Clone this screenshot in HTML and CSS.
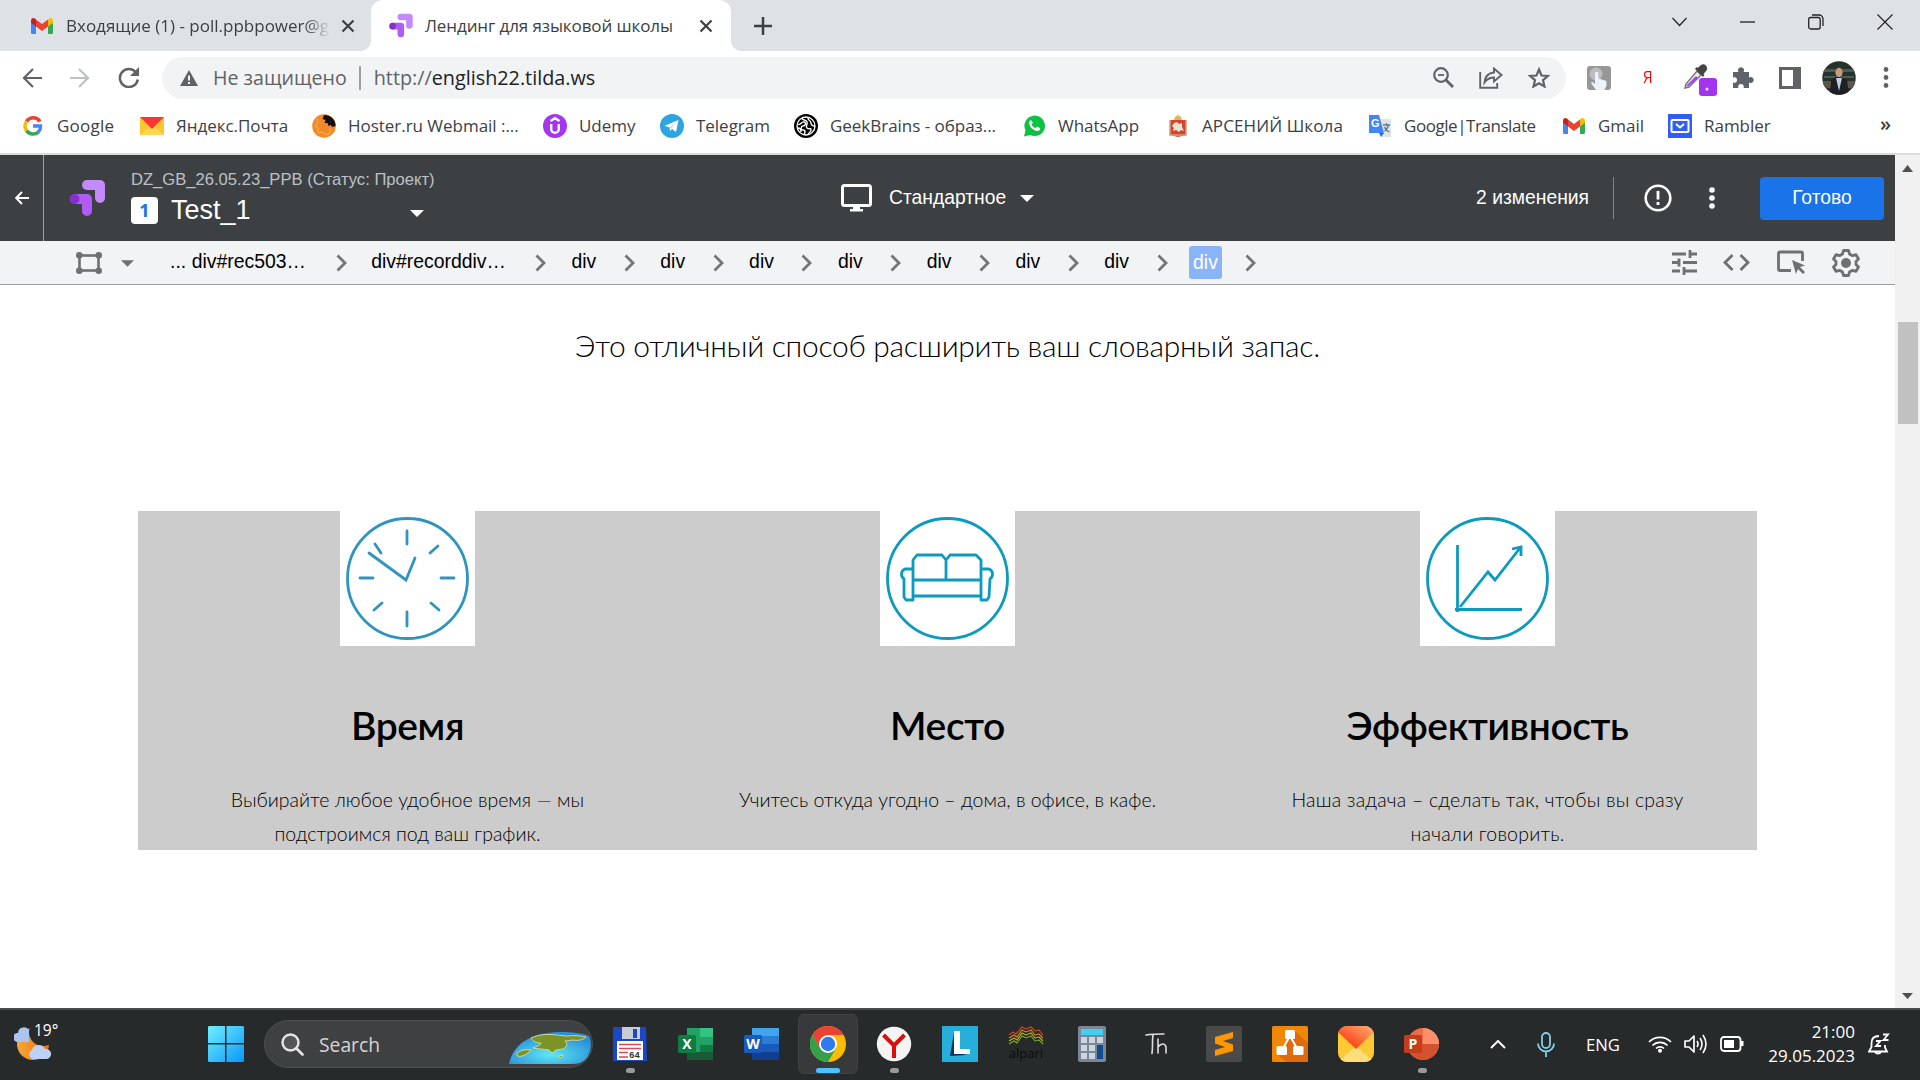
FILE: index.html
```html
<!DOCTYPE html>
<html lang="ru">
<head>
<meta charset="utf-8">
<title>Лендинг для языковой школы</title>
<link rel="stylesheet" href="styles.css">
</head>
<body>
<svg width="0" height="0" class="defs">
  <defs>
    <symbol id="gmail" viewBox="0 0 22 16"><path d="M0 3v11.500a1.500 1.500 0 0 0 1.500 1.500H5V6z" fill="#4285f4"/><path d="M22 3v11.500a1.500 1.500 0 0 1-1.500 1.500H17V6z" fill="#34a853"/><path d="M5 1.500l6 4.500 6-4.500V8.500L11 13 5 8.500z" fill="#ea4335"/><path d="M0 2.500C0 .2 2.400-.6 4 .6l1 .8v7L0 4.800z" fill="#c5221f"/><path d="M22 2.500C22 .2 19.600-.6 18 .6l-1 .8v7l5-3.600z" fill="#fbbc04"/></symbol>
    <symbol id="optimize" viewBox="0 0 38 38"><path d="M18 6h13v13" fill="none" stroke="#c58af9" stroke-width="10" stroke-linecap="round" stroke-linejoin="round"/><path d="M6 20h12v12" fill="none" stroke="#af5cf7" stroke-width="10" stroke-linecap="round" stroke-linejoin="round"/><circle cx="5.500" cy="20" r="5" fill="#8430ce"/></symbol>
    <symbol id="x" viewBox="0 0 14 14"><path d="M1.500 1.500l11 11m0-11l-11 11" stroke="#3c4043" stroke-width="2.200"/></symbol>
    <symbol id="chev" viewBox="0 0 11 18"><path d="M1.500 1.500L9 9l-7.500 7.500" fill="none" stroke="#757575" stroke-width="2.800"/></symbol>
    <symbol id="caret" viewBox="0 0 14 7"><path d="M0 0h14L7 7z" fill="currentColor"/></symbol>
  </defs>
</svg>

<div class="tabstrip">
  <div class="tab">
    <svg width="22" height="16"><use href="#gmail"/></svg>
    <span class="tab-title faded">Входящие (1) - poll.ppbpower@g</span>
    <svg width="14" height="14"><use href="#x"/></svg>
  </div>
  <div class="tab active">
    <svg width="25" height="25"><use href="#optimize"/></svg>
    <span class="tab-title">Лендинг для языковой школы</span>
    <svg width="14" height="14"><use href="#x"/></svg>
  </div>
  <svg class="plus" width="18" height="18" viewBox="0 0 18 18"><path d="M9 0v18M0 9h18" stroke="#3c4043" stroke-width="2.500"/></svg>
  <div class="window-controls">
    <svg width="15" height="10" viewBox="0 0 15 10"><path d="M.5 1L7.500 8.500 14.500 1" fill="none" stroke="#222" stroke-width="1.200"/></svg>
    <svg width="15" height="2" viewBox="0 0 15 2"><path d="M0 1h15" stroke="#222" stroke-width="1.300"/></svg>
    <svg width="16" height="16" viewBox="0 0 16 16"><path d="M4 1h7a4 4 0 0 1 4 4v7" fill="none" stroke="#222" stroke-width="1.300"/><rect x=".7" y="3.500" width="11.500" height="11.500" rx="2" fill="none" stroke="#222" stroke-width="1.300"/></svg>
    <svg width="16" height="16" viewBox="0 0 16 16"><path d="M.5.5l15 15m0-15l-15 15" stroke="#222" stroke-width="1.200"/></svg>
  </div>
</div>

<div class="toolbar">
  <svg width="20" height="20" viewBox="0 0 20 20"><path d="M20 10H2M11 1L2 10l9 9" fill="none" stroke="#5f6368" stroke-width="2.200"/></svg>
  <svg width="20" height="20" viewBox="0 0 20 20"><path d="M0 10h18M9 1l9 9-9 9" fill="none" stroke="#bdc1c6" stroke-width="2.200"/></svg>
  <svg width="22" height="21" viewBox="0 0 22 21"><path d="M18 5.500A9 9 0 1 0 19.800 12.500" fill="none" stroke="#5f6368" stroke-width="2.500"/><path d="M21 0v9h-9z" fill="#5f6368"/></svg>
  <div class="omnibox">
    <svg width="18" height="16" viewBox="0 0 18 16"><path d="M9 0l9 16H0z" fill="#5f6368"/><path d="M9 5.500v5M9 12v2" stroke="#f1f3f4" stroke-width="2"/></svg>
    <span class="insecure">Не защищено</span>
    <span class="url"><i>http://</i>english22.tilda.ws</span>
    <div class="omni-actions">
      <svg width="21" height="21" viewBox="0 0 21 21"><circle cx="8" cy="8" r="6.800" fill="none" stroke="#5f6368" stroke-width="2.200"/><path d="M13 13l7 7" stroke="#5f6368" stroke-width="2.800"/><path d="M5 8h6" stroke="#5f6368" stroke-width="1.800"/></svg>
      <svg width="24" height="22" viewBox="0 0 24 22"><path d="M1.200 5v15.800h17V16" fill="none" stroke="#5f6368" stroke-width="1.900"/><path d="M5.500 15.500C6 9.500 9.500 6 15 5.500V1.500l7.500 6.500-7.500 6.500V10.500c-4 0-7 1.500-9.500 5z" fill="none" stroke="#5f6368" stroke-width="1.900"/></svg>
      <svg width="22" height="21" viewBox="0 0 22 21"><path d="M11 2.500l2.500 6 6.300.5-4.800 4.200 1.500 6.300L11 16.200l-5.500 3.300L7 13.200 2.200 9l6.300-.5z" fill="none" stroke="#5f6368" stroke-width="2.200"/></svg>
    </div>
  </div>
  <div class="extensions">
    <svg width="24" height="24" viewBox="0 0 24 24"><rect width="24" height="24" rx="3" fill="#979797"/><circle cx="9" cy="8" r="6.500" fill="#bdbdbd"/><path d="M8 7.500a1.700 1.700 0 0 1 3.400 0v5l8 2.500v5l-2 4H9l-5-7 1.500-1L8 18z" fill="#eef3fa"/></svg>
    <span class="ya">Я</span>
    <svg width="34" height="34" viewBox="0 0 34 34"><path d="M3 22l-1 4 4-1L18 13l-4-4z" fill="#eee" stroke="#777" stroke-width="1.500"/><path d="M3.500 23.500L13 14l2 2-10 8.500z" fill="#a142f4"/><path d="M12 7l8 8 1.500-2-1-1 3-3.500a4 4 0 0 0-5.500-5.500l-3.500 3-1-1z" fill="#444"/><rect x="16" y="16" width="18" height="18" rx="3" fill="#a333ee"/><circle cx="24" cy="27" r="1.500" fill="#fff"/></svg>
    <svg width="22" height="22" viewBox="0 0 22 22"><path d="M1 5h5.500a3 3 0 1 1 5 0H17v5.500a3 3 0 1 1 0 5V21h-5.500a2.800 2.800 0 1 0-5 0H1v-5.500a2.800 2.800 0 1 0 0-5z" fill="#5f6368"/></svg>
    <svg width="22" height="22" viewBox="0 0 22 22"><path fill-rule="evenodd" d="M0 0h22v22H0zM3 3v16h11V3z" fill="#5f6368"/></svg>
    <svg width="34" height="34" viewBox="0 0 34 34"><defs><clipPath id="av"><circle cx="17" cy="17" r="16.700"/></clipPath></defs><g clip-path="url(#av)"><path d="M0 0h34v34H0z" fill="#26332d"/><path d="M0 8h34v3H0zM2 15h30v2H2z" fill="#4d5b54"/><path d="M0 20h34v7H0z" fill="#5f554b"/><path d="M8 34l1-15 7-4 9 4 2 15z" fill="#1d1f24"/><path d="M14 17l3 13 3-13z" fill="#bcd0e0"/><ellipse cx="17" cy="11.500" rx="3.600" ry="4.700" fill="#c99a7d"/></g></svg>
    <svg width="6" height="21" viewBox="0 0 6 21"><circle cx="3" cy="2.500" r="2.400" fill="#5f6368"/><circle cx="3" cy="10.500" r="2.400" fill="#5f6368"/><circle cx="3" cy="18.500" r="2.400" fill="#5f6368"/></svg>
  </div>
</div>

<div class="bookmarks">
  <div class="bm"><svg viewBox="0 0 24 24"><path d="M19 7.500A8 8 0 0 0 5.500 7.500" fill="none" stroke="#ea4335" stroke-width="3.600"/><path d="M5.500 7.500a8 8 0 0 0 0 9" fill="none" stroke="#fbbc05" stroke-width="3.600"/><path d="M5.500 16.500a8 8 0 0 0 12 1.500" fill="none" stroke="#34a853" stroke-width="3.600"/><path d="M12 12h7.500a8 8 0 0 1-2.200 6" fill="none" stroke="#4285f4" stroke-width="3.400"/></svg>Google</div>
  <div class="bm"><svg viewBox="0 0 24 24"><path d="M0 3h24v18H0z" fill="#ffc531"/><path d="M0 21l12-11 12 11z" fill="#ffd64d"/><path d="M0 3h24L12 15z" fill="#f33"/></svg>Яндекс.Почта</div>
  <div class="bm"><svg viewBox="0 0 24 24"><circle cx="12" cy="12" r="11.800" fill="#f48a27"/><path d="M12 1c8 0 12 6 11.500 11l-3 1-2-2-2 1-1-3-3 0 1-3-3-1z" fill="#111"/><path d="M5 5l1 4-3 3 3 2 0 5 5-1 3 3 4-2 0-5" fill="none" stroke="#e8b56f"/></svg>Hoster.ru Webmail :...</div>
  <div class="bm"><svg viewBox="0 0 24 24"><circle cx="12" cy="12" r="12" fill="#a435f0"/><path d="M7.500 7l4.500-2.800L16.500 7M8.200 10v5a3.800 3.800 0 0 0 7.600 0v-5" fill="none" stroke="#fff" stroke-width="2.400"/></svg>Udemy</div>
  <div class="bm"><svg viewBox="0 0 24 24"><circle cx="12" cy="12" r="12" fill="#2ca5e0"/><path d="M4.500 11.800L18.500 6l-2.500 12-4-3-2 2-.5-3.500z" fill="#fff"/><path d="M9.500 13.500l6.500-5-5 6" fill="#b9dff3"/></svg>Telegram</div>
  <div class="bm"><svg viewBox="0 0 24 24"><circle cx="12" cy="12" r="12" fill="#000"/><circle cx="12" cy="12" r="9" fill="none" stroke="#fff" stroke-width="1.300"/><path d="M4 10c3 2 3-3 6-2s1 4-1 4-3 4 0 4 2 3 1 5M8 4c0 3 4 1 5 4s-2 4 0 6 4-1 4 2-3 2-3 5M14 4c0 3 3 2 3 5s2 3 4 3M4 14c2 0 3 1 3 4" fill="none" stroke="#fff" stroke-width="1.400"/></svg>GeekBrains - образ...</div>
  <div class="bm"><svg viewBox="0 0 24 24"><path d="M2 22.500l1.500-6A10.300 10.300 0 1 1 8 21z" fill="#0fc143"/><path d="M8 6.500c-3 3 2 10.500 8 10.500 2-.5 2.500-2 2-3l-3-1.500-1.500 1.500c-2-.5-3.500-2-4-4L11 9 9.500 6.500z" fill="#fff"/></svg>WhatsApp</div>
  <div class="bm"><svg viewBox="0 0 24 24"><path d="M8 6l1-3 3-2 3 2 1 3z" fill="#d9b850"/><path d="M4 6h16v15l-8 2-8-2z" fill="#d4442f"/><path d="M8 9l3-1 2 2 3-1v4l2 4-3-1-2 2-3-2-3 1 1-3-2-2z" fill="#ece3d2"/><path d="M4 6v16m16-16v16M5 21h14" stroke="#d3a07c" stroke-width="1.500"/></svg>АРСЕНИЙ Школа</div>
  <div class="bm"><svg viewBox="0 0 24 24"><path d="M10 5h13v18H13z" fill="#dfe3e8"/><path d="M1 1h10l5 18H1z" fill="#4285f4"/><path d="M11 19h5l-3 4z" fill="#3367d6"/><text x="3" y="13" class="gt">G</text><path d="M15 11h7m-3.500-2v2m2 0c-1 4-2 5-4 6m0-4c1 3 2 4 5 5" fill="none" stroke="#607d8b" stroke-width="1.300"/></svg>Google|Translate</div>
  <div class="bm"><svg viewBox="0 0 24 24"><use href="#gmail" x="1" y="4" width="22" height="16"/></svg>Gmail</div>
  <div class="bm"><svg viewBox="0 0 24 24"><path d="M0 0h24v24H0z" fill="#315efb"/><rect x="3.500" y="6" width="17" height="12" rx="1" fill="none" stroke="#fff" stroke-width="2"/><path d="M8 10l4 3.500 4-3.500" fill="none" stroke="#fff" stroke-width="2"/></svg>Rambler</div>
  <div class="more">»</div>
</div>

<div class="viewport">
  <div class="page">
    <header class="editor">
      <div class="back"><svg width="14" height="14" viewBox="0 0 14 14"><path d="M14 7H1.500M7 1L1.200 7 7 13" fill="none" stroke="#fff" stroke-width="1.900"/></svg></div>
      <svg width="38" height="38"><use href="#optimize"/></svg>
      <div class="project">
        <div class="status">DZ_GB_26.05.23_PPB (Статус: Проект)</div>
        <div class="variant"><b>1</b><span>Test_1</span><svg width="14" height="7"><use href="#caret"/></svg></div>
      </div>
      <div class="device">
        <svg width="31" height="28" viewBox="0 0 31 28"><rect x="1.500" y="1.500" width="28" height="20" rx="2" fill="none" stroke="#fff" stroke-width="3"/><path d="M12 22h7v3h3v2.500H9V25h3z" fill="#fff"/></svg>
        <span>Стандартное</span>
        <svg width="14" height="7"><use href="#caret"/></svg>
      </div>
      <div class="actions">
        <span class="changes">2 изменения</span>
        <svg width="28" height="28" viewBox="0 0 28 28"><circle cx="14" cy="14" r="12.300" fill="none" stroke="#fff" stroke-width="2.600"/><path d="M14 7v8.500M14 18v3" stroke="#fff" stroke-width="2.800"/></svg>
        <svg width="6" height="22" viewBox="0 0 6 22"><circle cx="3" cy="3" r="2.800" fill="#fff"/><circle cx="3" cy="11" r="2.800" fill="#fff"/><circle cx="3" cy="19" r="2.800" fill="#fff"/></svg>
        <button class="done">Готово</button>
      </div>
    </header>

    <nav class="crumbs">
      <svg class="frame" width="26" height="22" viewBox="0 0 26 22"><rect x="3.500" y="3.500" width="19" height="15" fill="none" stroke="#6e7072" stroke-width="2.600"/><g fill="#6e7072"><circle cx="3.300" cy="3.300" r="3.300"/><circle cx="22.700" cy="3.300" r="3.300"/><circle cx="3.300" cy="18.700" r="3.300"/><circle cx="22.700" cy="18.700" r="3.300"/></g></svg>
      <svg class="frame-caret" width="13" height="7"><use href="#caret"/></svg>
      <span class="crumb long first">... div#rec503…</span><svg width="11" height="18"><use href="#chev"/></svg>
      <span class="crumb long">div#recorddiv…</span><svg width="11" height="18"><use href="#chev"/></svg>
      <span class="crumb">div</span><svg width="11" height="18"><use href="#chev"/></svg>
      <span class="crumb">div</span><svg width="11" height="18"><use href="#chev"/></svg>
      <span class="crumb">div</span><svg width="11" height="18"><use href="#chev"/></svg>
      <span class="crumb">div</span><svg width="11" height="18"><use href="#chev"/></svg>
      <span class="crumb">div</span><svg width="11" height="18"><use href="#chev"/></svg>
      <span class="crumb">div</span><svg width="11" height="18"><use href="#chev"/></svg>
      <span class="crumb">div</span><svg width="11" height="18"><use href="#chev"/></svg>
      <span class="crumb"><em>div</em></span><svg width="11" height="18"><use href="#chev"/></svg>
      <div class="tools">
        <svg width="25" height="25" viewBox="0 0 25 25"><path d="M0 4h14M18 4h7M18 0v8M0 12.500h7M11 12.500h14M7 8.500v8M0 21h8M12 21h13M12 17v8" fill="none" stroke="#6e7072" stroke-width="2.800"/></svg>
        <svg width="27" height="17" viewBox="0 0 27 17"><path d="M9.500 1L2 8.500 9.500 16M17.500 1L25 8.500 17.500 16" fill="none" stroke="#6e7072" stroke-width="2.800"/></svg>
        <svg width="29" height="25" viewBox="0 0 29 25"><path d="M14 20.500H3a1.500 1.500 0 0 1-1.500-1.500V3.500A1.500 1.500 0 0 1 3 2h21a1.500 1.500 0 0 1 1.500 1.500V11" fill="none" stroke="#6e7072" stroke-width="2.800"/><path d="M15 10l13 5.500-5 1.500 5 5-2 2-5-5-2 5z" fill="#6e7072"/></svg>
        <svg width="28" height="28" viewBox="0 0 28 28"><path d="M11.500 1.500h5l1 3.500 3 1.700 3.500-1 2.500 4.300-2.500 2.500v3l2.500 2.500-2.500 4.300-3.500-1-3 1.700-1 3.500h-5l-1-3.500-3-1.700-3.500 1L1.500 18 4 15.500v-3L1.500 10 4 5.700l3.500 1 3-1.700z" fill="none" stroke="#6e7072" stroke-width="2.800" stroke-linejoin="round"/><circle cx="14" cy="14" r="5" fill="#6e7072"/></svg>
      </div>
    </nav>

    <main>
      <p class="lead">Это отличный способ расширить ваш словарный запас.</p>
      <section class="features">
        <article>
          <svg class="pic" viewBox="0 0 135 135"><rect width="135" height="135" fill="#fff"/><g fill="none" stroke="#3095be" stroke-width="2.800"><circle cx="67.500" cy="67.500" r="60"/><g stroke-linecap="round"><path d="M67 20v13M67 101v14M20 67h13M101 67h13M90 42l8-7M42 92l-8 7M91 92l8 7M41 42l-6-9"/><path d="M29 42l37 27 9-22"/></g></g></svg>
          <h2>Время</h2>
          <p>Выбирайте любое удобное время — мы<br>подстроимся под ваш график.</p>
        </article>
        <article>
          <svg class="pic" viewBox="0 0 135 135"><rect width="135" height="135" fill="#fff"/><g fill="none" stroke="#0c9abe" stroke-width="2.800" stroke-linejoin="round"><circle cx="67.500" cy="67.500" r="60"/><path d="M33 68V49l4-5h25l4 5v20M66 49l4-5h26l5 5v20M33 58h-8c-5 2-4 8-1 10v18l2 3h7V68M101 58h8c5 2 4 8 1 10l-1 18-2 3h-6V68M33 69h68M33 85h68"/></g></svg>
          <h2>Место</h2>
          <p>Учитесь откуда угодно – дома, в офисе, в кафе.</p>
        </article>
        <article>
          <svg class="pic" viewBox="0 0 135 135"><rect width="135" height="135" fill="#fff"/><g fill="none" stroke="#0c9abe" stroke-width="2.800"><circle cx="67.500" cy="67.500" r="60"/><path d="M37.500 34v67M35 98.500h67M40 96l28-35 7 8 25-32M92 38l9-2 0 9"/></g></svg>
          <h2>Эффективность</h2>
          <p class="wide">Наша задача – сделать так, чтобы вы сразу<br>начали говорить.</p>
        </article>
      </section>
    </main>
  </div>
  <div class="scrollbar">
    <svg width="11" height="7" viewBox="0 0 11 7"><path d="M0 7h11L5.500 0z" fill="#505050"/></svg>
    <div class="thumb"></div>
    <svg width="11" height="6" viewBox="0 0 11 6"><path d="M0 0h11L5.500 6z" fill="#505050"/></svg>
  </div>
</div>

<footer class="taskbar">
  <div class="weather">
    <svg width="42" height="38" viewBox="0 0 42 38"><defs><linearGradient id="sun" x2="1" y2="0"><stop stop-color="#f2a93b"/><stop offset="1" stop-color="#f0700f"/></linearGradient></defs><circle cx="19" cy="19" r="16" fill="url(#sun)"/><path d="M3 17a4.500 4.500 0 0 1 1-9 6 6 0 0 1 11-3v12z" fill="#aac4ee"/><circle cx="29" cy="7" r="14" fill="#2a2a2a"/><path d="M18 34a5 5 0 0 1 0-9 7 7 0 0 1 13-1 5 5 0 0 1 2 10z" fill="#bcd1f5"/></svg>
    <span>19°</span>
  </div>
  <svg class="win" width="36" height="36" viewBox="0 0 36 36"><defs><linearGradient id="wg" x2="1" y2="1"><stop stop-color="#6ff0ff"/><stop offset="1" stop-color="#0a96fb"/></linearGradient></defs><path d="M1 0h16v17H0V1zM18.500 0H35l1 1v16H18.500zM0 18.500h17V36H1l-1-1zM18.500 18.500H36V35l-1 1H18.500z" fill="url(#wg)"/></svg>
  <div class="search">
    <svg width="23" height="23" viewBox="0 0 23 23"><circle cx="9.500" cy="9.500" r="8" fill="#555" stroke="#e4e4e4" stroke-width="2.400"/><path d="M15.500 15.500l6 6" stroke="#e4e4e4" stroke-width="2.600" stroke-linecap="round"/></svg>
    <span>Search</span>
    <svg width="82" height="33" viewBox="0 0 82 33"><defs><radialGradient id="gl" cx=".5" cy=".7" r=".6"><stop stop-color="#5fe8f5"/><stop offset="1" stop-color="#2a90d8"/></radialGradient></defs><path d="M0 32C5 8 28 0 52 0c12 0 21 1 28 4 3 7 2 13 0 18-3 7-9 10-16 10z" fill="url(#gl)"/><g fill="#7c9426" stroke="#e7e3a6" stroke-width=".8"><path d="M22 6c8-4 18-4 26-3l10 1c8-1 14 0 19 1-3 3-8 4-13 3l-8 1c3 3 2 6-2 8l-7 1-4 3-3-3c-6-1-11-1-16-2 5-2 8-3 8-5-4 0-8-1-10-5z"/><path d="M8 21c4-3 9-4 14-3-2 3-6 5-9 6-3 1-6 0-5-3zM49 24l5-1-2 3z"/></g></svg>
  </div>
  <div class="apps">
    <div class="app"><svg viewBox="0 0 36 36"><path d="M1 1h33l1 34H1z" fill="#1d48c5"/><path d="M10 1h18v12H10z" fill="#c9ccd6"/><path d="M21 3h4v9h-4z" fill="#1d48c5"/><path d="M5 15h26v19H5z" fill="#fff"/><path d="M7 18.500h22M7 22.500h22M7 26.500h9M7 31h9" stroke="#d94a57" stroke-width="1.300"/><text x="17" y="32" class="fl">64</text></svg><i></i></div>
    <div class="app"><svg viewBox="0 0 36 36"><path d="M9 2h14v32H9z" fill="#21a366"/><path d="M22 2h13v9H22z" fill="#33c481"/><path d="M22 11h13v8H22zM9 19h13v7H9z" fill="#21a366"/><path d="M22 19h13v7H22z" fill="#107c41"/><path d="M9 26h26v8H9z" fill="#185c37"/><rect y="9" width="18" height="18" rx="1.500" fill="#107c41"/><text x="9" y="23" class="ms">X</text></svg></div>
    <div class="app"><svg viewBox="0 0 36 36"><path d="M8 2h27v8H8z" fill="#41a5ee"/><path d="M8 10h27v8H8z" fill="#2b7cd3"/><path d="M8 18h27v8H8z" fill="#185abd"/><path d="M8 26h27v8H8z" fill="#103f91"/><rect y="9" width="18" height="18" rx="1.500" fill="#185abd"/><text x="9" y="23" class="ms">W</text></svg></div>
    <div class="app current"><svg viewBox="0 0 36 36"><circle cx="18" cy="18" r="18" fill="#fbbc04"/><path d="M2.400 9A18 18 0 0 1 33.600 9H18v9l-7.800 4.500z" fill="#ea4335"/><path d="M2.400 9A18 18 0 0 0 18 36l7.800-13.500L18 18l-7.800 4.500z" fill="#34a047"/><circle cx="18" cy="18" r="9" fill="#fff"/><circle cx="18" cy="18" r="7.200" fill="#3079ee"/></svg><i></i></div>
    <div class="app"><svg viewBox="0 0 36 36"><circle cx="18" cy="18" r="17.200" fill="#f4f4f4"/><path d="M7.500 9L18 19.500 28.500 9M18 19v13" fill="none" stroke="#d8100c" stroke-width="4"/></svg><i></i></div>
    <div class="app"><svg viewBox="0 0 36 36"><path d="M0 0h36v36H0z" fill="#26afdb"/><path d="M12 7l-4 23 16-1-8-4z" fill="#0c2e63"/><path d="M12 5h6v18h10v5H12z" fill="#fff"/></svg></div>
    <div class="app"><svg viewBox="0 0 36 36"><g fill="none" stroke-width="1.100"><path d="M1 9l4-3 3 2 6-7 4 2 5-2 4 4 4-1 4 5" stroke="#d9481d"/><path d="M1 12l5-3 3 2 5-7 4 2 5-2 4 5 4-1 4 4" stroke="#d98a1d"/><path d="M1 15l5-3 3 2 5-7 4 2 5-2 4 5 4-1 4 4" stroke="#b5b71f"/><path d="M1 18l5-3 3 2 5-7 4 2 5-2 4 5 4-1 4 4" stroke="#7cab23"/></g><text x="18" y="32" class="alp">alpari</text></svg></div>
    <div class="app"><svg viewBox="0 0 36 36"><rect x="4" width="28" height="36" rx="2" fill="#7b8794"/><path d="M7 3h22v6H7z" fill="#3fd0f5"/><g fill="#ccd5e0"><path d="M7 11h6v6H7zM15 11h6v6h-6zM23 11h6v6h-6zM7 19h6v6H7zM15 19h6v6h-6zM7 27h6v6H7zM15 27h6v6h-6z"/></g><path d="M23 19h6v14h-6z" fill="#104c91"/></svg></div>
    <div class="app"><svg viewBox="0 0 36 36"><path d="M6 9c6-1 12-1 18-1M13 9c-1 6 0 12-1 18.500M18 13v14M18 21c3-4 7-4 8 0v6" fill="none" stroke="#ddd" stroke-width="1.600" stroke-linecap="round"/></svg></div>
    <div class="app"><svg viewBox="0 0 36 36"><rect width="36" height="36" rx="2" fill="#4a4a4a"/><path d="M9 11l18-5v6l-10 3 10 3.500V25L9 30v-6l10-3-10-3.500z" fill="#ff9800"/></svg></div>
    <div class="app"><svg viewBox="0 0 36 36"><rect width="36" height="36" rx="1.500" fill="#f08705"/><path d="M23 5l13 12v19H14l-9-8 10-14z" fill="#df6c0c"/><path d="M18 10l-8 14M18 10l8 14" stroke="#fff" stroke-width="2"/><g fill="#fff"><rect x="13" y="4" width="10" height="9" rx="1.500"/><rect x="4.500" y="20" width="10.500" height="9" rx="1.500"/><rect x="21" y="20" width="10.500" height="9" rx="1.500"/></g></svg></div>
    <div class="app"><svg viewBox="0 0 36 36"><defs><clipPath id="mc"><rect width="36" height="36" rx="9"/></clipPath><linearGradient id="mg" x1="0" y1="1" x2="1" y2="0"><stop offset=".3" stop-color="#ff4a1c"/><stop offset="1" stop-color="#ffb27a"/></linearGradient></defs><g clip-path="url(#mc)"><path d="M0 0h36v36H0z" fill="#ffc935"/><path d="M0 36l18-16 18 16z" fill="#ffdc7c"/><path d="M0 0h36v6L18 23 0 6z" fill="url(#mg)"/></g></svg></div>
    <div class="app"><svg viewBox="0 0 36 36"><circle cx="19" cy="18" r="16" fill="#ed6c47"/><path d="M19 2a16 16 0 0 1 16 16H19z" fill="#ff8f6b"/><path d="M3 18h32a16 16 0 0 1-32 0z" fill="#d35230"/><rect y="9" width="18" height="18" rx="1.500" fill="#c43e1c"/><text x="9" y="23" class="ms">P</text></svg><i></i></div>
  </div>
  <div class="tray">
    <svg width="16" height="9" viewBox="0 0 16 9"><path d="M1 8l7-7 7 7" fill="none" stroke="#fff" stroke-width="2"/></svg>
    <svg class="mic" width="18" height="25" viewBox="0 0 18 25"><rect x="5" y="1" width="8" height="15" rx="4" fill="none" stroke="#7fd0ec" stroke-width="1.800"/><path d="M1 11.500a8 8 0 0 0 16 0M9 20v5" fill="none" stroke="#7fd0ec" stroke-width="1.800"/></svg>
    <span class="lang">ENG</span>
    <svg class="wifi" width="24" height="18" viewBox="0 0 24 18"><path d="M1 7a15.500 15.500 0 0 1 22 0M4.500 10.500a10.500 10.500 0 0 1 15 0M8 13.500a5.800 5.800 0 0 1 8 0" fill="none" stroke="#fff" stroke-width="1.700"/><circle cx="12" cy="15.800" r="2" fill="#fff"/></svg>
    <svg class="vol" width="24" height="20" viewBox="0 0 24 20"><path d="M1 7h4l5-5v16l-5-5H1z" fill="none" stroke="#fff" stroke-width="1.700" stroke-linejoin="round"/><path d="M13 7q2 3 0 6M16 4q4 6 0 12M19 1q6 9 0 18" fill="none" stroke="#fff" stroke-width="1.600"/></svg>
    <svg class="bat" width="24" height="16" viewBox="0 0 24 16"><rect x="1" y="1" width="19.500" height="14" rx="3" fill="none" stroke="#fff" stroke-width="1.800"/><path d="M4 4h10v8H4zM21 5h2.500v5H21z" fill="#fff"/></svg>
    <div class="clock">21:00<br>29.05.2023</div>
    <svg width="22" height="23" viewBox="0 0 22 23"><path d="M11 3C5.500 3 3.500 6 3.500 10v4L1 18.500h18l-2-4v-2.500M7 19a3.500 3.500 0 0 0 6 0" fill="none" stroke="#fff" stroke-width="1.800"/><path d="M8 8h4.500L8 13h5M15 1.500h5L15.500 7h5" fill="none" stroke="#fff" stroke-width="1.800"/></svg>
  </div>
</footer>
</body>
</html>
```
FILE: styles.css
```css
* { box-sizing: border-box; }
html, body { margin: 0; height: 100%; overflow: hidden; }
body {
  width: 1920px; height: 1080px; display: flex; flex-direction: column;
  background: #fff; font-family: "Open Sans", "Noto Sans", sans-serif; color: #3c4043;
}
svg { display: block; flex: none; }
.defs { position: absolute; }
p, h2 { margin: 0; }

/* tabs */
.tabstrip { height: 51px; flex: none; display: flex; align-items: center; background: #dee1e6; }
.tab { display: flex; align-items: center; width: 371px; height: 51px; padding: 0 16px 0 31px; font-size: 17px; white-space: nowrap; }
.tab-title { letter-spacing: -.1px; margin-left: 13px; }
.faded { width: 275px; letter-spacing: 0; -webkit-mask-image: linear-gradient(90deg, #000 87%, transparent 96%); mask-image: linear-gradient(90deg, #000 87%, transparent 96%); }
.tab.active { position: relative; width: 360px; padding: 0 18px; background: #fff; border-radius: 12px 12px 0 0; }
.tab.active::before, .tab.active::after { content: ""; position: absolute; bottom: 0; width: 10px; height: 10px; }
.tab.active::before { left: -10px; background: radial-gradient(circle at 0 0, transparent 9.500px, #fff 10px); }
.tab.active::after { right: -10px; background: radial-gradient(circle at 100% 0, transparent 9.500px, #fff 10px); }
.tab.active .tab-title { margin-left: 11px; letter-spacing: -.1px; }
.tab svg:last-child { margin-left: auto; }
.plus { margin-left: 23px; }
.window-controls { margin-left: auto; height: 44px; align-self: flex-start; display: flex; align-items: center; gap: 53px; padding-right: 27px; }

/* address row */
.toolbar { height: 53px; flex: none; display: flex; align-items: center; padding-left: 22px; gap: 28px; }
.omnibox { display: flex; align-items: center; width: 1404px; height: 42px; margin-left: -6px; padding-left: 18px; border-radius: 21px; background: #f1f3f4; font-size: 20px; }
.insecure { color: #5f6368; margin-left: 15px; font-size: 19.600px; padding-right: 12px; border-right: 2px solid #9aa0a6; line-height: 24px; }
.url { margin-left: 13px; color: #202124; font-size: 19.800px; line-height: 24px; }
.url i { font-style: normal; color: #5f6368; }
.omni-actions { margin-left: auto; display: flex; align-items: center; gap: 25px; padding-right: 16px; }
.extensions { display: flex; align-items: center; margin-left: -7px; }
.ya { width: 9px; margin: 0 39px 0 32px; font: 17px "Liberation Sans Narrow", "Liberation Sans", sans-serif; color: #f00; transform: scaleX(.75); transform-origin: 0 50%; }
.extensions svg:nth-child(3) { margin: 2px 0 0 -8px; }
.extensions svg:nth-child(4) { margin-left: 15px; }
.extensions svg:nth-child(5) { margin-left: 25px; }
.extensions svg:nth-child(6) { margin-left: 21px; }
.extensions svg:nth-child(7) { margin-left: 27px; }

/* bookmarks */
.bookmarks {
  height: 51px; flex: none; padding-left: 21px; padding-bottom: 6px; border-bottom: 2px solid #dadce0;
  display: grid; align-items: center; font-size: 17px; letter-spacing: -.03px; white-space: nowrap;
  grid-template-columns: 119px 172px 231px 117px 134px 228px 144px 202px 194px 106px 212px 20px;
}
.bm { display: flex; align-items: center; gap: 12px; }
.bm svg { width: 24px; height: 24px; }
.bm:nth-child(1) { letter-spacing: .25px; }
.bm:nth-child(8) { letter-spacing: .1px; }
.bm:nth-child(9) { letter-spacing: -.45px; }
.gt { font: bold 11px "Liberation Sans", sans-serif; fill: #fff; }
.more { font-size: 20px; font-weight: 600; line-height: 24px; padding-bottom: 3px; }

/* viewport */
.viewport { flex: 1; display: flex; min-height: 0; }
.page { flex: 1; display: flex; flex-direction: column; font-family: "Liberation Sans", Arial, sans-serif; }
.scrollbar { width: 25px; background: #f1f1f1; display: flex; flex-direction: column; align-items: center; padding: 10px 0 9px; }
.thumb { width: 20px; height: 102px; margin: 150px 0 auto; background: #c1c1c1; }

/* editor header */
.editor { height: 86px; flex: none; display: flex; align-items: center; background: #3c4043; color: #fff; font-size: 19.300px; }
.back { width: 44px; height: 86px; margin-right: 25px; padding-left: 15px; display: flex; align-items: center; border-right: 1px solid #9aa0a6; }
.project { width: 293px; margin-left: 24px; display: flex; flex-direction: column; gap: 5px; }
.status { font-size: 16.600px; line-height: 20px; color: #bdc1c6; white-space: nowrap; margin-top: -1px; }
.variant { display: flex; align-items: center; font-size: 27px; line-height: 32px; }
.variant b { width: 27px; height: 27px; border-radius: 4px; background: #fff; color: #1a73e8; font: bold 18px/27px "Open Sans", sans-serif; text-align: center; }
.variant span { margin: -1px 0 0 13px; }
.variant svg { margin: 7px 0 0 auto; }
.device { display: flex; align-items: center; margin-left: 417px; }
.device span { margin: 0 14px 0 17px; }
.actions { display: flex; align-items: center; margin-left: auto; padding-right: 11px; }
.changes { padding-right: 24px; margin-right: 30px; line-height: 42px; border-right: 1px solid #80868b; }
.actions svg:nth-of-type(2) { margin-left: 37px; }
.done { width: 124px; height: 43px; margin-left: 45px; border: 0; border-radius: 4px; background: #1a73e8; color: #fff; font: 19.300px "Liberation Sans", Arial, sans-serif; }

/* breadcrumbs */
.crumbs { height: 44px; flex: none; display: flex; align-items: center; background: #f1f3f4; border-bottom: 1px solid #9aa0a6; color: #000; font-size: 19.400px; }
.frame { margin-left: 76px; }
.frame-caret { margin: 2px 0 0 19px; color: #6e7072; }
.crumb { width: 77.800px; text-align: center; white-space: nowrap; padding: 0 2px 2px 0; }
.crumb.long { width: 188px; padding-right: 5px; }
.crumb.first { margin-left: 14px; padding-right: 8px; }
.crumb em { font-style: normal; display: inline-block; width: 33px; line-height: 33px; border-radius: 3px; background: #8ab4f8; color: #fff; position: relative; top: 1px; }
.tools { display: flex; align-items: center; margin-left: auto; gap: 26.500px; padding-right: 35px; }

/* landing content */
main { flex: 1; font-family: Lato, "Open Sans", sans-serif; color: #000; text-align: center; }
.lead { margin-top: 40px; font-weight: 300; font-size: 30px; letter-spacing: -.3px; line-height: 40px; }
.features { width: 1619px; height: 339px; margin: 146px 0 0 138px; background: #ccc; display: grid; grid-template-columns: 539px 541px 539px; }
.pic { width: 135px; height: 135px; margin: 0 auto; }
.features h2 { margin-top: 53px; font-weight: 600; font-size: 39px; letter-spacing: -.4px; line-height: 52px; }
.features p { margin-top: 32px; font-weight: 300; font-size: 19.500px; line-height: 34px; }
.features .wide { letter-spacing: .2px; }

/* taskbar */
.taskbar { height: 72px; flex: none; display: flex; align-items: center; background: #272a2b; border-top: 2px solid #4a4c4c; padding-bottom: 2px; color: #fff; }
.weather { position: relative; width: 208px; padding-left: 14px; }
.weather span { position: absolute; left: 34px; top: -5px; font-size: 15.500px; line-height: 20px; }
.search { display: flex; align-items: center; width: 329px; height: 48px; margin-left: 20px; padding: 0 1px 0 16px; border: 1px solid #4c4e4f; border-radius: 24px; background: #3e4041; color: #d5d5d5; font-size: 19.300px; }
.search span { margin-left: 15px; }
.search svg:last-child { margin-left: auto; margin-top: 8px; }
.apps { display: flex; margin-left: 7px; }
.app { width: 60px; height: 60px; margin-right: 6px; border-radius: 6px; display: flex; flex-direction: column; align-items: center; padding-top: 12px; }
.app svg { width: 36px; height: 36px; }
.app i { width: 9px; height: 5px; margin-top: 6px; border-radius: 3px; background: #999; }
.app.current { background: #37393a; border: 1px solid #414344; padding-top: 11px; }
.app.current i { width: 24px; background: #4cc2ff; }
.ms { font: bold 14px "Open Sans", sans-serif; fill: #fff; text-anchor: middle; }
.fl { font: bold 9px "Liberation Mono", monospace; fill: #333; }
.alp { font: 13px "Open Sans", sans-serif; fill: #0b0b0b; text-anchor: middle; }
.tray { display: flex; align-items: center; margin-left: auto; padding-right: 30px; }
.mic { margin-left: 31px; }
.lang { margin-left: 31px; font-size: 16.700px; }
.wifi { margin-left: 28px; }
.vol { margin-left: 12px; }
.bat { margin-left: 12px; }
.clock { width: 111px; text-align: right; font-size: 17px; line-height: 24px; margin-right: 13px; }
```
